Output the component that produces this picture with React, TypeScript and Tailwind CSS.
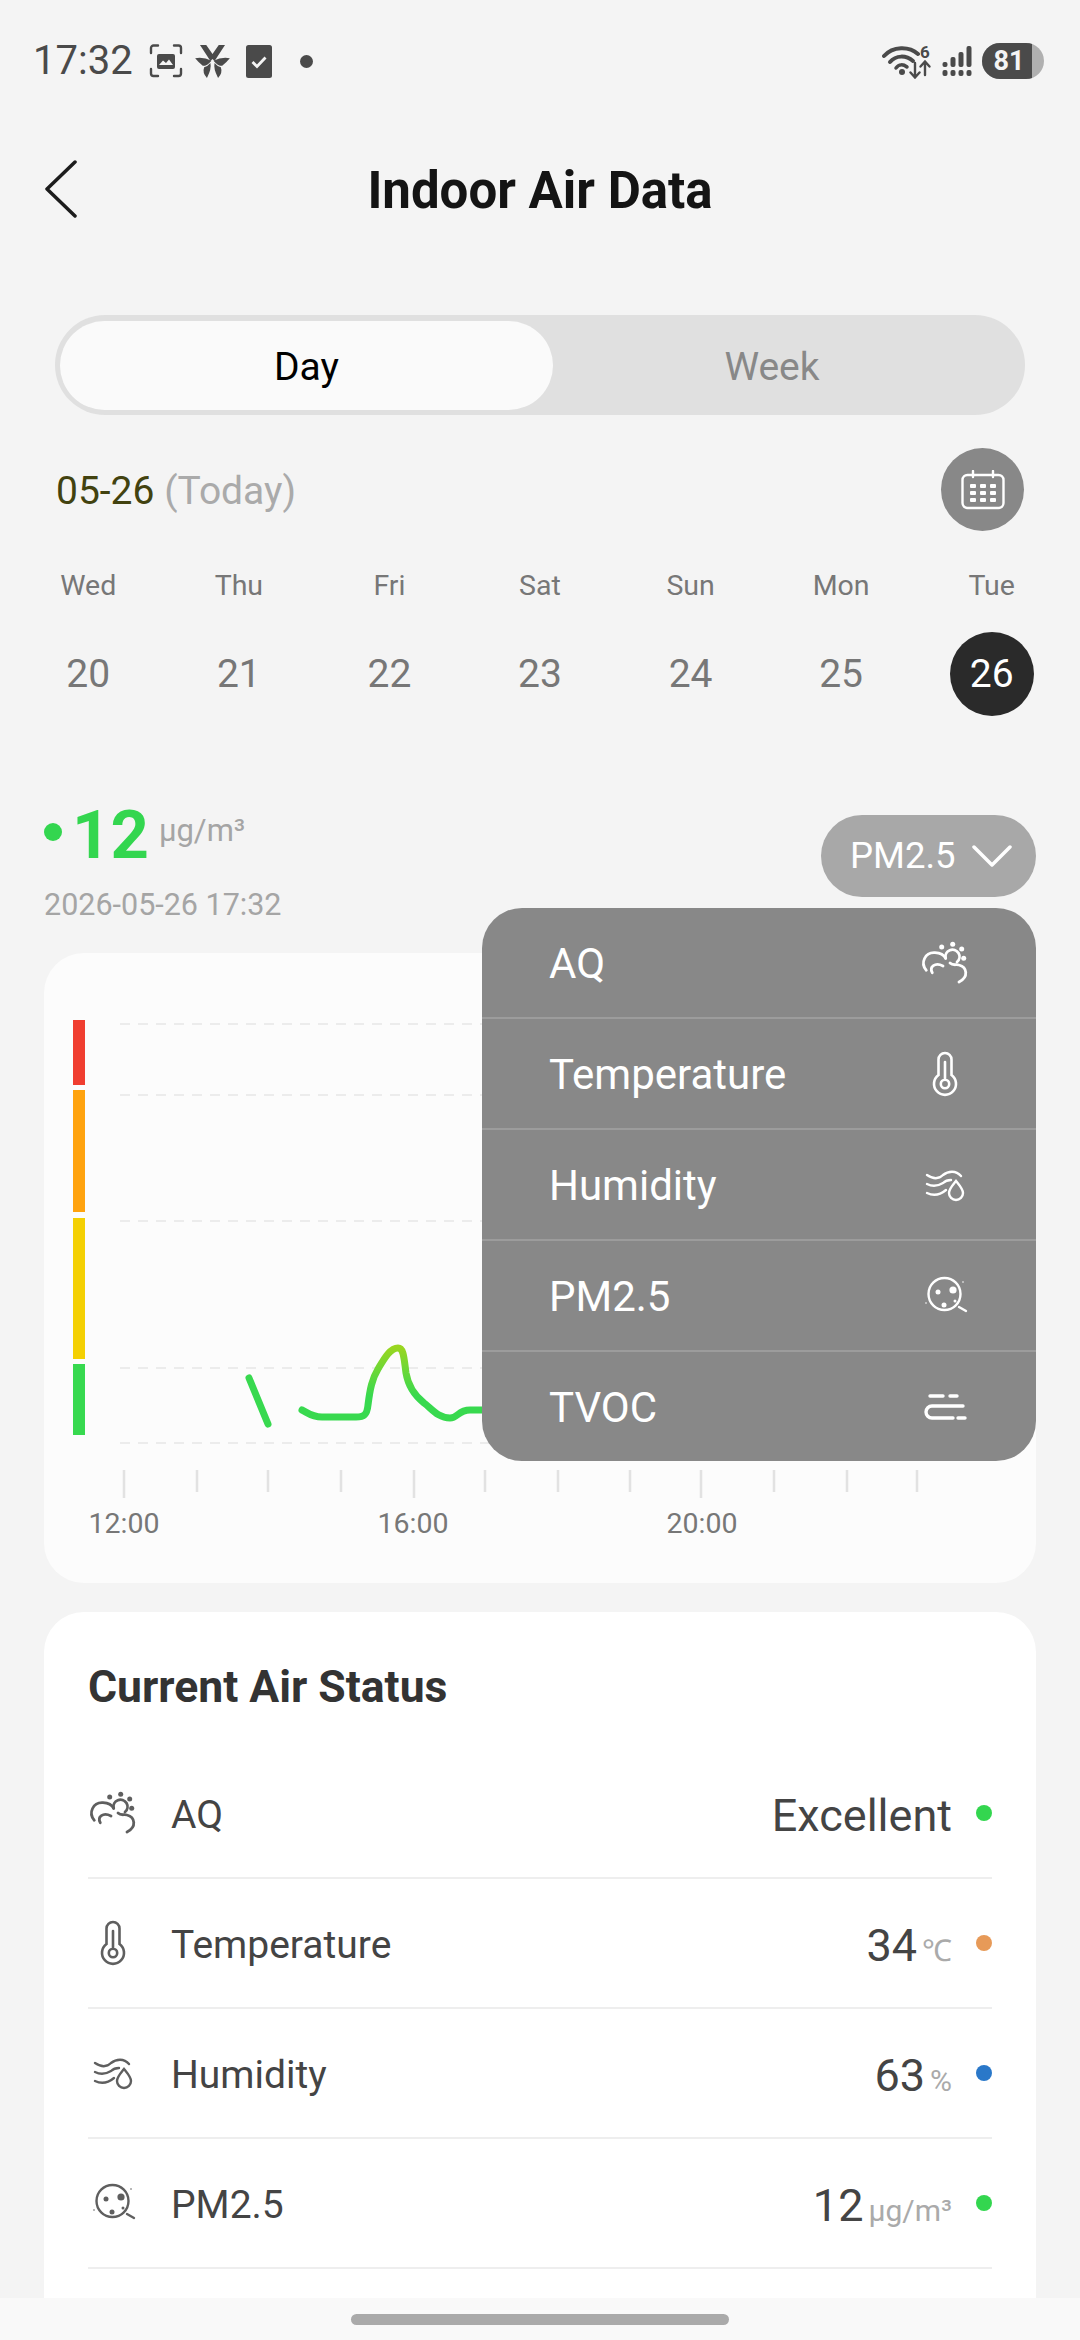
import type { ReactNode } from 'react'

type IconProps = { className?: string }

function AqIcon({ className }: IconProps) {
  return (
    <svg viewBox="0 0 60 60" className={className} fill="none" stroke="currentColor" strokeWidth="2.8" strokeLinecap="round">
      <path d="M11.300 37.300C5 30 10 19 20 19.700C25 20 29 22 30.700 25.300" />
      <path d="M17.300 39.700C14 34 20 29 28 33" />
      <path d="M30.700 25.300A7 7 0 1 1 42 29" />
      <path d="M35 30C38 33 41 31 44 32C52 34 54 44 44 49" />
      <g fill="currentColor" stroke="none">
        <circle cx="26.700" cy="14" r="2.500" />
        <circle cx="37.700" cy="11.300" r="2.500" />
        <circle cx="46.700" cy="16" r="2.500" />
        <circle cx="48.700" cy="25.300" r="2.500" />
      </g>
    </svg>
  )
}

function ThermoIcon({ className }: IconProps) {
  return (
    <svg viewBox="0 0 60 60" className={className} fill="none" stroke="currentColor" strokeWidth="2.6" strokeLinecap="round">
      <path d="M23.500 31V15.500a6.500 6.500 0 0 1 13 0V31a11 11 0 1 1-13 0Z" />
      <path d="M30 18V34" />
      <circle cx="30" cy="40" r="4.200" />
    </svg>
  )
}

function HumidityIcon({ className }: IconProps) {
  return (
    <svg viewBox="0 0 60 60" className={className} fill="none" stroke="currentColor" strokeWidth="2.400" strokeLinecap="round">
      <path d="M12 20C18 24 24 24 28 20C33 16 41 15 46 21" />
      <path d="M12 29C18 32 23 31 28 28C30 26 33 25 36 25" />
      <path d="M12 38C18 41 25 40 31 35" />
      <path d="M41 26C45 31 48 34 48 38A7 7 0 0 1 34 38C34 34 37 31 41 26Z" />
    </svg>
  )
}

function DustIcon({ className }: IconProps) {
  return (
    <svg viewBox="0 0 60 60" className={className} fill="none" stroke="currentColor" strokeWidth="2.400" strokeLinecap="round">
      <circle cx="29.500" cy="28" r="16" />
      <path d="M44 41L51 45" />
      <g fill="currentColor" stroke="none">
        <circle cx="23" cy="26" r="2.500" />
        <circle cx="38" cy="24" r="3.600" />
        <circle cx="29" cy="39" r="2.500" />
        <circle cx="40" cy="35" r="1.500" />
        <circle cx="11" cy="37" r="0.800" />
        <circle cx="48" cy="16" r="0.800" />
      </g>
    </svg>
  )
}

function TvocIcon({ className }: IconProps) {
  return (
    <svg viewBox="0 0 60 60" className={className} fill="none" stroke="currentColor" strokeWidth="3.400" strokeLinecap="round">
      <path d="M15 19H28" />
      <path d="M35 19H42" />
      <path d="M48 29H17a6 6 0 0 0 0 12H38" />
      <path d="M43 41H50" />
    </svg>
  )
}

function StatusBar() {
  return (
    <div className="flex h-[122px] shrink-0 items-center justify-between pl-[33px] pr-[36px] text-[#4a4a4a]">
      <div className="flex items-center">
        <span className="text-[40px] leading-none">17:32</span>
        <svg viewBox="0 0 34 34" className="ml-[16px] h-[34px] w-[34px]" fill="none" stroke="currentColor" strokeWidth="2.400" strokeLinecap="round">
          <path d="M2 9V4a2.500 2.500 0 0 1 2.500-2.500H9M25 1.500H29.500A2.500 2.500 0 0 1 32 4V9M32 25V29.500A2.500 2.500 0 0 1 29.500 32H25M9 32H4.500A2.500 2.500 0 0 1 2 29.500V25" />
          <rect x="8" y="10" width="18" height="15" rx="2" fill="currentColor" stroke="none" />
          <path d="M10 21L14 16.500L17 19L20 15.500L24 21Z" fill="#f4f4f4" stroke="none" />
        </svg>
        <svg viewBox="0 0 100 95" className="ml-[12px] h-[33px] w-[35px]" fill="currentColor">
          <path d="M14 0H32L50 26L68 0H86L56 46L50 40L44 46Z" />
          <path d="M0 38Q25 34 47 45Q35 60 22 60Q10 50 0 38Z" />
          <path d="M100 38Q75 34 53 45Q65 60 78 60Q90 50 100 38Z" />
          <path d="M44 52Q48 68 34 95Q20 80 26 64Q36 62 44 52Z" />
          <path d="M56 52Q52 68 66 95Q80 80 74 64Q64 62 56 52Z" />
        </svg>
        <svg viewBox="0 0 26 33" className="ml-[16px] h-[33px] w-[26px]">
          <rect width="26" height="33" rx="2.500" fill="currentColor" />
          <path d="M6.500 17L11 21.500L19.500 12.500" fill="none" stroke="#f4f4f4" strokeWidth="2.800" />
        </svg>
        <div className="ml-[28px] h-[13px] w-[13px] rounded-full bg-[#4a4a4a]" />
      </div>
      <div className="flex items-center">
        <svg viewBox="0 0 50 36" className="h-[36px] w-[50px]" fill="none" stroke="currentColor" strokeLinecap="round">
          <path d="M2 13C11 3 27 3 36 11" strokeWidth="4" />
          <path d="M8 19C14 12 24 12 31 18" strokeWidth="4" />
          <path d="M14 25C17 21 21 21 25 24" strokeWidth="3.500" />
          <circle cx="20" cy="29" r="3" fill="currentColor" stroke="none" />
          <path d="M33 20V34M28.500 29.500L33 34.500L37.500 29.500" strokeWidth="2.400" />
          <path d="M43 32V19M38.500 23.500L43 18.500L47.500 23.500" strokeWidth="2.400" />
          <text x="38" y="15" fontSize="17" fontWeight="700" fill="currentColor" stroke="none" fontFamily="Roboto, sans-serif">6</text>
        </svg>
        <svg viewBox="0 0 30 34" className="ml-[10px] h-[34px] w-[30px]" fill="currentColor">
          <rect x="0.500" y="26" width="5" height="6" rx="2" />
          <rect x="0.500" y="18" width="5" height="5" rx="2" />
          <rect x="8.500" y="26" width="5" height="6" rx="2" />
          <rect x="8.500" y="13" width="5" height="10" rx="2" />
          <rect x="16.500" y="26" width="5" height="6" rx="2" />
          <rect x="16.500" y="8" width="5" height="15" rx="2" />
          <rect x="24.500" y="26" width="5" height="6" rx="2" />
          <rect x="24.500" y="2" width="5" height="21" rx="2" />
        </svg>
        <div className="ml-[10px] flex h-[36px] w-[62px] overflow-hidden rounded-full bg-[#b0b0b0]">
          <div className="flex w-[50px] items-center justify-center bg-[#4a4a4a] pl-[4px] text-[27px] font-bold leading-none text-[#f4f4f4]">81</div>
        </div>
      </div>
    </div>
  )
}

function Header() {
  return (
    <div className="relative flex h-[132px] shrink-0 items-center justify-center pt-[4px]">
      <svg viewBox="0 0 32 58" className="absolute left-[45px] top-[38px] h-[58px] w-[32px]" fill="none" stroke="#1c1c1c" strokeWidth="3.500" strokeLinecap="round" strokeLinejoin="round">
        <path d="M30 2L2 29L30 56" />
      </svg>
      <h1 className="text-[51px] font-bold leading-none text-[#141414]">Indoor Air Data</h1>
    </div>
  )
}

const days = [
  ['Wed', '20'],
  ['Thu', '21'],
  ['Fri', '22'],
  ['Sat', '23'],
  ['Sun', '24'],
  ['Mon', '25'],
  ['Tue', '26'],
]

function DateSection() {
  return (
    <>
      <div className="mx-[55px] mt-[61px] flex h-[100px] w-[970px] items-center rounded-full bg-[#e0e0e0] pl-[5px]">
        <div className="flex h-[89px] w-[493px] items-center justify-center rounded-full bg-[#fafafa] pt-[5px] text-[39px] text-black">Day</div>
        <div className="w-[438px] pt-[5px] text-center text-[39px] text-[#888888]">Week</div>
      </div>
      <div className="mx-[56px] mt-[33px] flex h-[83px] items-center justify-between">
        <div className="pt-[4px] text-[39px] leading-none">
          <span className="text-[#42420f]">05-26</span> <span className="text-[#aaaaaa]">(Today)</span>
        </div>
        <div className="flex h-[83px] w-[83px] items-center justify-center rounded-full bg-[#888888]">
          <svg viewBox="0 0 44 40" className="h-[40px] w-[44px]" fill="none" stroke="#ffffff" strokeWidth="2.400">
            <rect x="1.500" y="5" width="41" height="33" rx="5" />
            <path d="M12 1V7M32 1V7" strokeLinecap="round" />
            <g fill="#ffffff" stroke="none">
              <rect x="9" y="14" width="6" height="4" rx="1" />
              <rect x="19" y="14" width="6" height="4" rx="1" />
              <rect x="29" y="14" width="6" height="4" rx="1" />
              <rect x="9" y="21" width="6" height="4" rx="1" />
              <rect x="19" y="21" width="6" height="4" rx="1" />
              <rect x="29" y="21" width="6" height="4" rx="1" />
              <rect x="9" y="28" width="6" height="4" rx="1" />
              <rect x="19" y="28" width="6" height="4" rx="1" />
              <rect x="29" y="28" width="6" height="4" rx="1" />
            </g>
          </svg>
        </div>
      </div>
      <div className="mx-[13px] mt-[38px] grid w-[1054px] grid-cols-7">
        {days.map(([name, num]) => (
          <div key={name} className="flex flex-col items-center">
            <span className="h-[34px] text-[28.500px] leading-[34px] text-[#777777]">{name}</span>
            <span
              className={`mt-[29px] flex h-[84px] w-[84px] items-center justify-center rounded-full text-[39px] ${
                num === '26' ? 'bg-[#2a2a2a] text-white' : 'text-[#777777]'
              }`}
            >
              {num}
            </span>
          </div>
        ))}
      </div>
    </>
  )
}

function ReadingRow() {
  return (
    <div className="mx-[44px] mt-[99px] flex h-[138px] justify-between">
      <div className="-mt-[21px]">
        <div className="flex h-[82px] items-baseline">
          <span className="relative -top-[3px] mr-[10px] h-[18px] w-[18px] self-center rounded-full bg-[#33d64f]" />
          <span className="text-[67px] font-bold leading-[82px] text-[#33d64f]">12</span>
          <span className="relative top-[-17px] ml-[10px] text-[31px] leading-none text-[#a5a5a5]">μg/m³</span>
        </div>
        <div className="mt-[11px] text-[30.500px] leading-[36px] text-[#a5a5a5]">2026-05-26 17:32</div>
      </div>
      <div className="flex h-[82px] w-[215px] items-center rounded-full bg-[#a8a8a8] pl-[29px] text-[36.500px] text-white">
        PM2.5
        <svg viewBox="0 0 40 22" className="ml-[16px] h-[22px] w-[40px]" fill="none" stroke="#ffffff" strokeWidth="3.500" strokeLinecap="round" strokeLinejoin="round">
          <path d="M2 2L20 20L38 2" />
        </svg>
      </div>
    </div>
  )
}

const gridLines = [1023, 1094, 1220, 1367, 1442]
const ticks = [124, 197, 268, 341, 414, 485, 558, 630, 701, 774, 847, 917]
const majorTicks = [124, 414, 701]

function ChartCard() {
  return (
    <div className="mx-[44px] h-[630px] w-[992px] shrink-0 rounded-[40px] bg-[#fcfcfc]">
      <svg viewBox="44 952 992 555" className="h-[555px] w-[992px]" fill="none">
        <defs>
          <linearGradient id="lineGrad" gradientUnits="userSpaceOnUse" x1="0" y1="1346" x2="0" y2="1395">
            <stop offset="0" stopColor="#9ad620" />
            <stop offset="1" stopColor="#38d94f" />
          </linearGradient>
        </defs>
        <rect x="73" y="1019" width="12" height="65" fill="#f03e30" />
        <rect x="73" y="1089" width="12" height="122" fill="#ffa30f" />
        <rect x="73" y="1217" width="12" height="141" fill="#f4d003" />
        <rect x="73" y="1363" width="12" height="71" fill="#37d94f" />
        {gridLines.map((y) => (
          <path key={y} d={`M120 ${y}H1000`} stroke="#e6e6e6" strokeWidth="1.500" strokeDasharray="10 8" />
        ))}
        {ticks.map((x) => (
          <path key={x} d={`M${x} 1469V${majorTicks.includes(x) ? 1497 : 1491}`} stroke="#e2e2e2" strokeWidth="2.500" />
        ))}
        <path d="M249 1377L268 1423" stroke="#38d94f" strokeWidth="7" strokeLinecap="round" />
        <path
          d="M302 1409C308 1412 312 1416 322 1416H356C364 1416 367 1414 368 1404C370 1388 372 1378 378 1368C384 1358 390 1347 398 1347C404 1347 404 1358 406 1372C408 1384 414 1394 424 1402C432 1408 438 1417 450 1417C458 1417 458 1409 470 1409H490"
          stroke="url(#lineGrad)"
          strokeWidth="7"
          strokeLinecap="round"
        />
      </svg>
      <div className="flex gap-[129px] text-center text-[28.500px] leading-[32px] text-[#777777]">
        <span className="w-[160px]">12:00</span>
        <span className="w-[160px]">16:00</span>
        <span className="w-[160px]">20:00</span>
      </div>
    </div>
  )
}

const menuItems: { label: string; icon: ReactNode }[] = [
  { label: 'AQ', icon: <AqIcon className="h-[60px] w-[60px]" /> },
  { label: 'Temperature', icon: <ThermoIcon className="h-[60px] w-[60px]" /> },
  { label: 'Humidity', icon: <HumidityIcon className="h-[60px] w-[60px]" /> },
  { label: 'PM2.5', icon: <DustIcon className="h-[60px] w-[60px]" /> },
  { label: 'TVOC', icon: <TvocIcon className="h-[60px] w-[60px]" /> },
]

function Dropdown() {
  return (
    <div className="absolute left-[482px] top-[908px] flex h-[553px] w-[554px] flex-col overflow-hidden rounded-[40px] bg-[#888888] text-[42px] text-white">
      {menuItems.map((item, i) => (
        <div
          key={item.label}
          className={`flex flex-1 items-center justify-between pl-[67px] pr-[61px] ${i > 0 ? 'border-t-2 border-[#9c9c9c]' : ''}`}
        >
          <span className="pt-[2px]">{item.label}</span>
          {item.icon}
        </div>
      ))}
    </div>
  )
}

type Row = {
  label: string
  icon: ReactNode
  value: string
  unit?: string
  dot: string
}

const rows: Row[] = [
  { label: 'AQ', icon: <AqIcon className="h-[60px] w-[60px]" />, value: 'Excellent', dot: 'bg-[#33d64f]' },
  { label: 'Temperature', icon: <ThermoIcon className="h-[60px] w-[60px]" />, value: '34', unit: '℃', dot: 'bg-[#e79a58]' },
  { label: 'Humidity', icon: <HumidityIcon className="h-[60px] w-[60px]" />, value: '63', unit: '%', dot: 'bg-[#2a78c9]' },
  { label: 'PM2.5', icon: <DustIcon className="h-[60px] w-[60px]" />, value: '12', unit: 'μg/m³', dot: 'bg-[#33d64f]' },
]

function StatusCard() {
  return (
    <div className="mx-[44px] mt-[29px] w-[992px] rounded-t-[40px] bg-white px-[44px] pb-[40px] pt-[46px]">
      <h2 className="mb-[33px] text-[44.500px] font-bold leading-[58px] text-[#333333]">Current Air Status</h2>
      {rows.map((row) => (
        <div key={row.label} className="flex h-[130px] items-center border-b-2 border-[#eeeeee]">
          <span className="-ml-[5px] text-[#5f5f5f]">{row.icon}</span>
          <span className="ml-[28px] pt-[4px] text-[39px] text-[#444444]">{row.label}</span>
          <span className="ml-auto flex items-baseline pt-[5px]">
            <span className="text-[45px] text-[#444444]">{row.value}</span>
            {row.unit && <span className="ml-[5px] text-[30px] text-[#aaaaaa]">{row.unit}</span>}
          </span>
          <span className={`ml-[24px] h-[16px] w-[16px] rounded-full ${row.dot}`} />
        </div>
      ))}
    </div>
  )
}

export default function App() {
  return (
    <div className="relative flex h-[2340px] w-[1080px] flex-col overflow-hidden bg-[#f4f4f4] font-['Roboto',sans-serif]">
      <div className="flex-1 overflow-hidden">
        <StatusBar />
        <Header />
        <DateSection />
        <ReadingRow />
        <ChartCard />
        <StatusCard />
      </div>
      <div className="flex h-[42px] shrink-0 items-center justify-center bg-[#f9f9f9]">
        <div className="h-[11px] w-[378px] rounded-full bg-[#aaaaaa]" />
      </div>
      <Dropdown />
    </div>
  )
}
